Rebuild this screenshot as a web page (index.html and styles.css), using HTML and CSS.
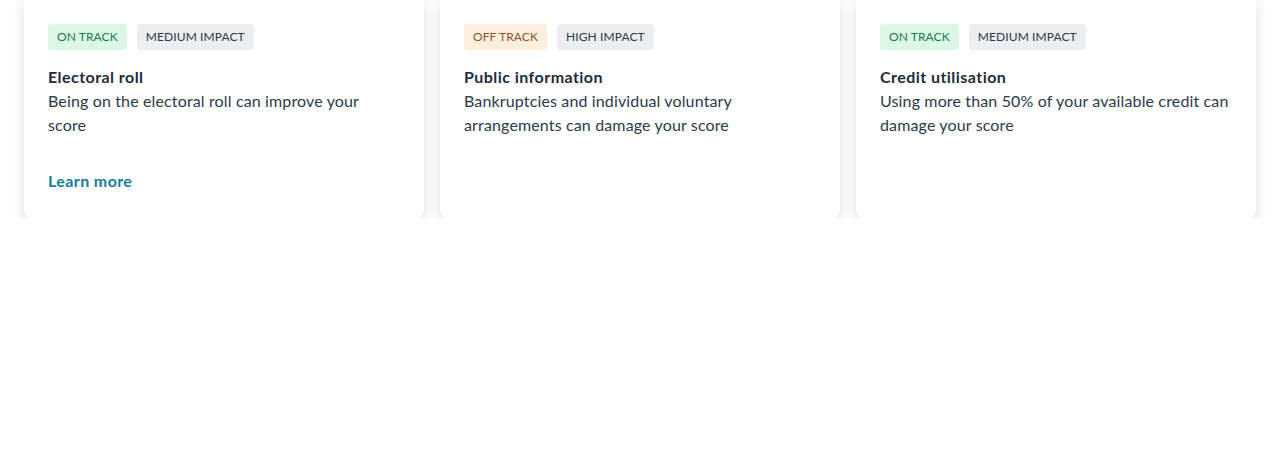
FILE: index.html
```html
<!DOCTYPE html>
<html>
<head>
<meta charset="utf-8">
<link rel="stylesheet" href="styles.css">
</head>
<body>
<div class="grid">
  <div class="card">
    <div class="badges"><span class="badge on">On track</span><span class="badge neutral">Medium impact</span></div>
    <div class="title">Electoral roll</div>
    <div class="text">Being on the electoral roll can improve your score</div>
    <a class="link" href="#">Learn more</a>
  </div>
  <div class="card">
    <div class="badges"><span class="badge off">Off track</span><span class="badge neutral">High impact</span></div>
    <div class="title">Public information</div>
    <div class="text">Bankruptcies and individual voluntary arrangements can damage your score</div>
  </div>
  <div class="card">
    <div class="badges"><span class="badge on">On track</span><span class="badge neutral">Medium impact</span></div>
    <div class="title">Credit utilisation</div>
    <div class="text">Using more than 50% of your available credit can damage your score</div>
  </div>
</div>
</body>
</html>
```

FILE: styles.css
```css
html, body {
  margin: 0;
  background: #fff;
  font-family: Lato, "Open Sans", sans-serif;
  color: #1e2b3c;
}
.grid {
  display: grid;
  grid-template-columns: repeat(3, 400px);
  gap: 16px;
  padding: 0 24px;
  align-items: stretch;
}
.card {
  background: #fff;
  border-radius: 0 0 8px 8px;
  box-shadow: 0 4px 14px rgba(0, 0, 0, 0.14);
  padding: 24px 24px 25px;
  display: flex;
  flex-direction: column;
}
.badges {
  display: flex;
  gap: 10px;
  margin-bottom: 15px;
}
.badge {
  font-size: 12px;
  line-height: 26px;
  height: 26px;
  padding: 0 9px;
  border-radius: 4px;
  text-transform: uppercase;
  letter-spacing: 0.1px;
}
.badge.on { background: #dcf7e8; color: #237a4b; }
.badge.off { background: #fdeede; color: #87552b; }
.badge.neutral { background: #eceef1; color: #2c3a4b; }
.title {
  font-size: 16px;
  line-height: 24px;
  font-weight: 700;
  letter-spacing: 0.45px;
}
.text {
  font-size: 16px;
  line-height: 24px;
  color: #2c3a4b;
  letter-spacing: 0.14px;
}
.link {
  margin-top: 32px;
  font-size: 16px;
  line-height: 24px;
  font-weight: 700;
  color: #157d9c;
  text-decoration: none;
  letter-spacing: 0.4px;
  align-self: flex-start;
}
```
